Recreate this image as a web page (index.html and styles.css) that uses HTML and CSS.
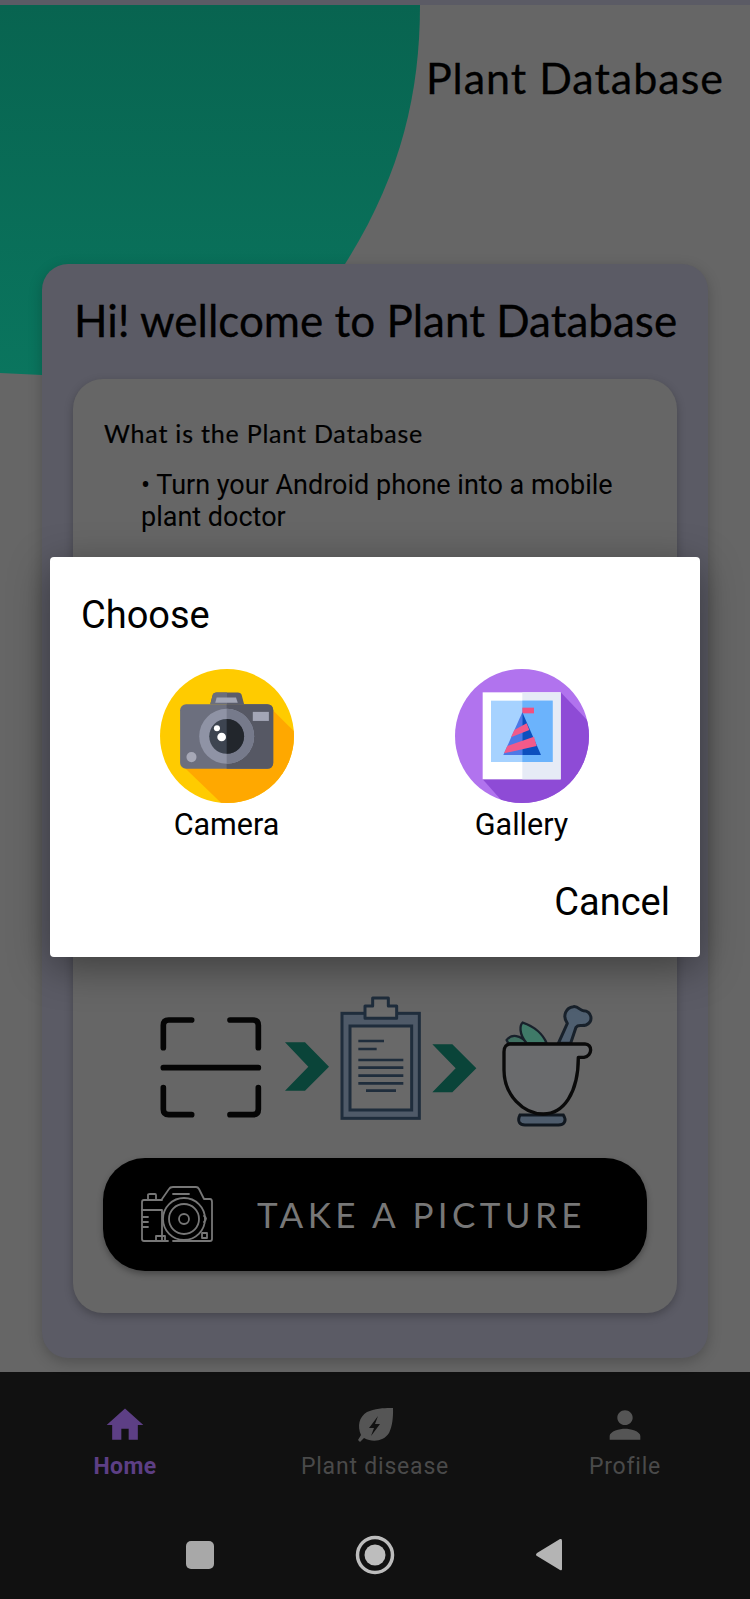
FILE: index.html
```html
<!DOCTYPE html>
<html lang="en">
<head>
<meta charset="utf-8">
<title>Plant Database</title>
<link rel="stylesheet" href="styles.css">
</head>
<body>
<div class="screen">
  <div class="status"></div>
  <main class="main">
    <svg class="blob" viewBox="0 0 420 375" width="420" height="375" aria-hidden="true">
      <defs><linearGradient id="blobFill" x1="0" y1="0" x2="0" y2="1"><stop offset="0" stop-color="#086450"/><stop offset="1" stop-color="#0a755e"/></linearGradient></defs>
      <path d="M0 0H420C420 90 400 172 345 259C300 320 150 370 42 370L0 368Z" fill="url(#blobFill)"/>
    </svg>
    <h1 class="app-title">Plant Database</h1>
    <section class="card">
      <h2 class="card-title">Hi! wellcome to Plant Database</h2>
      <div class="inner">
        <h3 class="inner-title">What is the Plant Database</h3>
        <p class="bullets">• Turn your Android phone into a mobile plant doctor</p>
        <svg class="steps" viewBox="0 0 1440 480" width="480" height="160" aria-hidden="true">
          <g fill="none" stroke="#050505" stroke-width="17" stroke-linecap="round" stroke-linejoin="round">
            <path d="M100 203V136Q100 120 116 120H185"/>
            <path d="M300 120H369Q385 120 385 136V203"/>
            <path d="M100 263H385"/>
            <path d="M100 323V388Q100 404 116 404H185"/>
            <path d="M300 404H369Q385 404 385 388V323"/>
          </g>
          <path d="M465 187H525L597 260L525 332H465L535 260Z" fill="#0a4439"/>
          <path d="M907 193H967L1039 265L967 337H907L977 265Z" fill="#0a4439"/>
          <rect x="636" y="100" width="232" height="315" fill="#4f5a68" stroke="#1f2d3c" stroke-width="9"/>
          <rect x="660" y="138" width="185" height="252" fill="#696969" stroke="#1f2d3c" stroke-width="9"/>
          <path d="M705 115V78H728V54H775V78H800V115Z" fill="#6c6c6c" stroke="#1f2d3c" stroke-width="9" stroke-linejoin="round"/>
          <path d="M685 183H762M685 207H740M685 240H820M685 263H820M685 287H820M685 310H820M708 332H798" stroke="#1f2d3c" stroke-width="8" fill="none"/>
          <path d="M1285 190L1312 130C1296 108 1308 82 1330 80C1345 78 1350 92 1360 92C1385 92 1392 125 1368 135C1355 140 1345 132 1338 142L1322 190Z" fill="#4f5f70" stroke="#18212b" stroke-width="9" stroke-linejoin="round"/>
          <path d="M1130 180C1145 160 1170 165 1195 190H1135Z" fill="#3f6f60" stroke="#18212b" stroke-width="7"/>
          <path d="M1190 190C1165 160 1170 135 1178 128C1215 140 1240 165 1250 190Z" fill="#3f7a68" stroke="#18212b" stroke-width="7"/>
          <path d="M1170 405C1160 425 1170 435 1185 435H1285C1305 435 1310 420 1300 405Z" fill="#4e5c6c" stroke="#111820" stroke-width="9"/>
          <path d="M1140 192H1365C1388 192 1388 228 1362 232H1345C1345 340 1300 402 1240 402C1180 402 1122 345 1122 270V215C1122 200 1130 192 1140 192Z" fill="#6a6b6d" stroke="#0a0a0a" stroke-width="10" stroke-linejoin="round"/>
        </svg>
        <button class="shoot" type="button">
          <svg class="shoot-icon" viewBox="0 0 72 56" width="72" height="56" aria-hidden="true">
            <g fill="none" stroke="#777" stroke-width="1.8" stroke-linejoin="round" stroke-linecap="round">
              <path d="M21 13L28 3Q29 1 32 1H55Q57 1 58 3L63 13H69Q71 13 71 16V53Q71 55 69 55H32M27 55H3Q1 55 1 53V16Q1 14 3 14H21"/>
              <path d="M7 14V9Q7 8 9 8H14Q15 8 15 9V14M1 24H21V55M15 55V50H24V55M32 8H48"/>
              <circle cx="43" cy="33" r="21"/><circle cx="43" cy="33" r="15"/><circle cx="43" cy="33" r="5"/>
              <path d="M2 31H7M2 36H7M2 41H7M63 30Q67 32 63 36"/>
              <rect x="61" y="47" width="5" height="5"/>
            </g>
          </svg>
          <span class="shoot-label">TAKE A PICTURE</span>
        </button>
      </div>
    </section>
  </main>
  <nav class="tabs">
    <div class="tab tab-active">
      <svg viewBox="0 0 24 24" width="44" height="44" aria-hidden="true"><path d="M10 20v-6h4v6h5v-8h3L12 3 2 12h3v8z" fill="#5d3f85"/></svg>
      <span>Home</span>
    </div>
    <div class="tab">
      <svg viewBox="-5 -5 44 44" width="44" height="44" aria-hidden="true"><path d="M35 0C35 0 19 -1 9 4C1 9 -1 18 3 27L0 32L2 34L6 30C15 35 26 33 31 25C36 16 35 0 35 0Z" fill="#555"/><path d="M20 8L11 20H16L13 28L22 16H17Z" fill="#111"/></svg>
      <span>Plant disease</span>
    </div>
    <div class="tab">
      <svg viewBox="0 0 24 24" width="46" height="44" aria-hidden="true" preserveAspectRatio="none"><path d="M12 12c2.21 0 4-1.79 4-4s-1.790-4-4-4-4 1.79-4 4 1.79 4 4 4zm0 2c-2.67 0-8 1.34-8 4v2h16v-2c0-2.66-5.33-4-8-4z" fill="#555"/></svg>
      <span>Profile</span>
    </div>
  </nav>
  <div class="sysnav">
    <svg viewBox="0 0 30 30" width="30" height="30" aria-hidden="true"><rect x="1" y="1" width="28" height="28" rx="5" fill="#a8a8a8"/></svg>
    <svg viewBox="0 0 40 40" width="40" height="40" aria-hidden="true"><circle cx="20" cy="20" r="17.500" fill="none" stroke="#bdbdbd" stroke-width="3.500"/><circle cx="20" cy="20" r="10.500" fill="#bdbdbd"/></svg>
    <svg viewBox="0 0 30 34" width="30" height="34" aria-hidden="true"><path d="M27 1Q28 1 28 3V31Q28 33 26 32L3 18Q1 17 3 15L26 1Z" fill="#b4b4b4"/></svg>
  </div>

  <div class="dialog" role="dialog">
    <h2 class="dialog-title">Choose</h2>
    <div class="options">
      <div class="option">
        <svg viewBox="93 27 400 400" width="134" height="134" aria-hidden="true">
          <defs><clipPath id="c1"><circle cx="293" cy="227" r="200"/></clipPath></defs>
          <circle cx="293" cy="227" r="200" fill="#ffcb00"/>
          <path d="M430 150L520 240V460H310L165 320Z" fill="#ffa800" clip-path="url(#c1)"/>
          <path d="M243 132L250 105Q252 97 262 97H325Q335 97 337 105L344 132Z" fill="#5b5d6a"/>
          <path d="M293 97H262Q252 97 250 105L243 132H293Z" fill="#6b6e7c"/>
          <path d="M262 112H320L325 128H258Z" fill="#a3a6b5"/>
          <rect x="153" y="132" width="278" height="193" rx="18" fill="#6c6f7e"/>
          <path d="M292 132H413Q431 132 431 150V307Q431 325 413 325H292Z" fill="#565864"/>
          <rect x="370" y="155" width="48" height="27" fill="#a3a6b6"/>
          <circle cx="187" cy="290" r="15" fill="#a6a8b6"/>
          <circle cx="292" cy="228" r="82" fill="#8f93a5"/>
          <path d="M292 146A82 82 0 0 1 292 310Z" fill="#767a8b"/>
          <circle cx="292" cy="228" r="52" fill="#3d4450"/>
          <path d="M292 176A52 52 0 0 1 292 280Z" fill="#22262c"/>
          <circle cx="263" cy="204" r="9" fill="#fff"/>
          <circle cx="277" cy="230" r="13" fill="#fff"/>
        </svg>
        <span class="option-label">Camera</span>
      </div>
      <div class="option">
        <svg viewBox="75 27 402 402" width="134" height="134" aria-hidden="true">
          <defs><clipPath id="c2"><circle cx="276" cy="228" r="201"/></clipPath></defs>
          <circle cx="276" cy="228" r="201" fill="#b173ee"/>
          <path d="M392 97L500 210V450H240L158 358Z" fill="#8e4bd6" clip-path="url(#c2)"/>
          <rect x="158" y="97" width="234" height="261" fill="#fff"/>
          <rect x="277" y="97" width="115" height="261" fill="#e6ebf6"/>
          <rect x="183" y="122" width="185" height="184" fill="#a6d2ff"/>
          <rect x="277" y="122" width="91" height="184" fill="#6bb3fc"/>
          <rect x="277" y="143" width="35" height="17" fill="#f2507f"/>
          <path d="M277 157L220 285H277Z" fill="#4d78e6"/>
          <path d="M277 157L333 285H277Z" fill="#0c4fbe"/>
          <path d="M253 210L290 190L298 210L243 232Z" fill="#f25a8a"/>
          <path d="M232 258L312 230L320 258L222 280Z" fill="#f25a8a"/>
        </svg>
        <span class="option-label">Gallery</span>
      </div>
    </div>
    <div class="dialog-actions"><span class="cancel">Cancel</span></div>
  </div>
</div>
</body>
</html>
```
FILE: styles.css
```css
* { box-sizing: border-box; }
html, body { margin: 0; padding: 0; }
body { width: 750px; height: 1599px; overflow: hidden; background: #666; font-family: Roboto, "Liberation Sans", sans-serif; }
.screen { position: relative; width: 750px; height: 1599px; display: flex; flex-direction: column; background: #666; overflow: hidden; }
.status { height: 5px; background: #5b5b65; flex: none; }
.main { position: relative; flex: none; height: 1367px; display: flex; flex-direction: column; align-items: stretch; }
.blob { position: absolute; left: 0; top: 0; display: block; }
.app-title { position: relative; margin: 0; height: 259px; padding: 48px 26px 0 0; text-align: right; font: 400 43px/50px Lato, sans-serif; letter-spacing: 1px; color: #000; -webkit-text-stroke: .3px #000; }
.card { position: relative; margin: 0 42px 0 42px; height: 1094px; padding: 26px 31px 0 31px; background: #5b5b65; border-radius: 26px; box-shadow: 0 4px 14px rgba(0,0,0,.22); }
.card-title { margin: 0 -8px 0 1px; font: 400 44px/60px Lato, sans-serif; color: #000; -webkit-text-stroke: .3px #000; white-space: nowrap; }
.inner { margin-top: 29px; height: 934px; padding: 38px 31px 0; background: #666; border-radius: 30px; box-shadow: 0 3px 8px rgba(0,0,0,.25); display: flex; flex-direction: column; }
.inner-title { margin: 0; font: 400 25px/32px Lato, sans-serif; letter-spacing: .8px; color: #000; -webkit-text-stroke: .2px #000; }
.bullets { margin: 20px 0 0 37px; font: 400 27px/32px Roboto, sans-serif; color: #000; }
.steps { display: block; margin: 447px 0 0 26px; flex: none; }
.shoot { margin: 18px 0 0 -1px; width: 544px; height: 113px; flex: none; border: 0; padding: 0 0 2px 38px; border-radius: 42px; background: #000; display: flex; align-items: center; gap: 44px; box-shadow: 0 3px 6px rgba(0,0,0,.3); }
.shoot-icon { display: block; flex: none; }
.shoot-label { font: 400 35px/40px Lato, sans-serif; letter-spacing: 4.4px; color: #777; white-space: nowrap; }
.tabs { flex: none; height: 147px; background: #111; display: grid; grid-template-columns: 250px 250px 250px; padding-top: 31px; }
.tab { display: flex; flex-direction: column; align-items: center; font: 400 23px/30px Roboto, sans-serif; letter-spacing: .8px; color: #4a4a4a; }
.tab svg { display: block; margin-bottom: 5px; }
.tab-active { color: #5d3f85; font-weight: 700; letter-spacing: .4px; }
.sysnav { flex: 1; background: #111; display: flex; align-items: center; justify-content: space-between; padding: 0 186px 8px 185px; }
.sysnav svg { display: block; }
.dialog { position: absolute; left: 50px; top: 557px; width: 650px; height: 400px; background: #fff; border-radius: 4px; box-shadow: 0 10px 40px rgba(0,0,0,.4); display: flex; flex-direction: column; padding: 36px 30px 0 31px; }
.dialog-title { margin: 0; font: 400 38px/44px Roboto, sans-serif; color: #000; }
.options { display: grid; grid-template-columns: 295px 295px; margin: 32px 0 0 -2px; }
.option { display: flex; flex-direction: column; align-items: center; }
.option svg { display: block; }
.option-label { font: 400 30.500px/36px Roboto, sans-serif; color: #000; margin-top: 4px; }
.dialog-actions { display: flex; justify-content: flex-end; margin-top: 37px; }
.cancel { font: 400 38px/44px Roboto, sans-serif; color: #000; }
```
